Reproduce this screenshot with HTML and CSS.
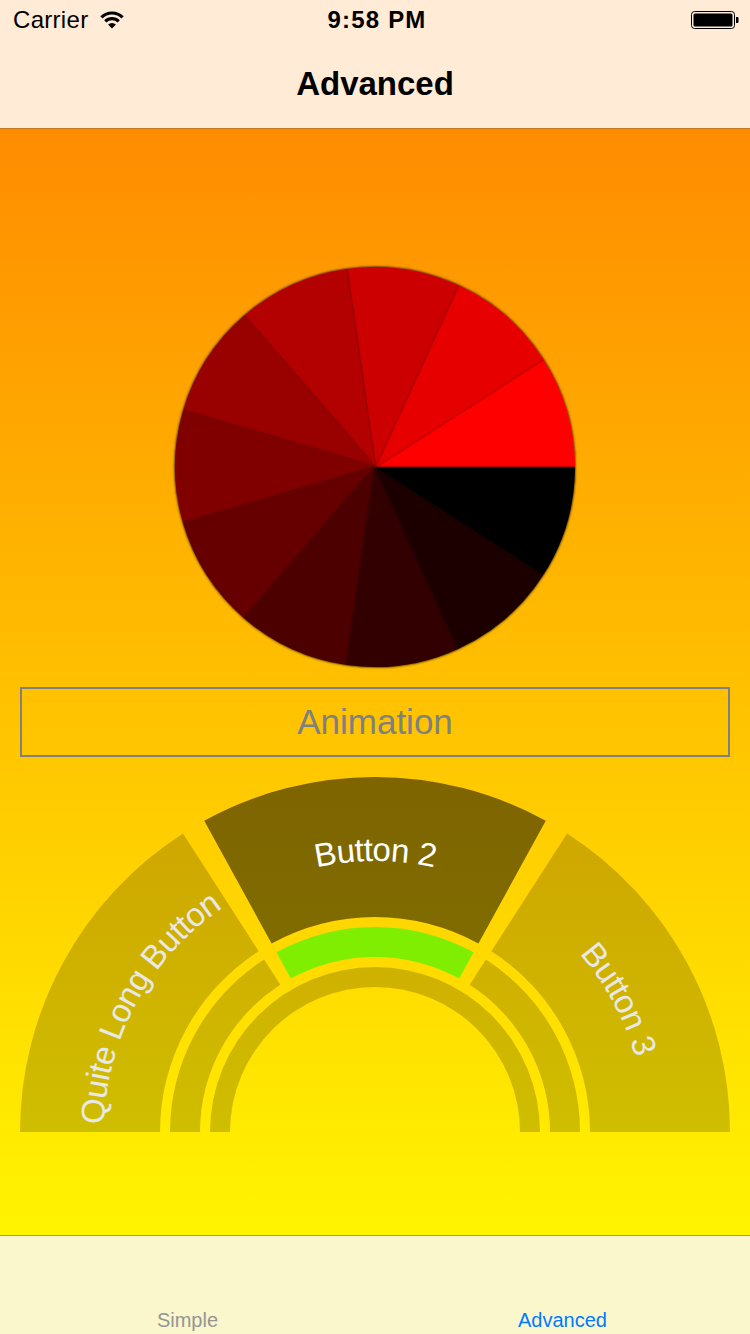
FILE: index.html
```html
<!DOCTYPE html>
<html>
<head>
<meta charset="utf-8">
<title>Advanced</title>
<link rel="stylesheet" href="styles.css">
</head>
<body>
<div class="screen">
  <header class="navbar">
    <div class="statusbar">
      <div class="status-left">
        <span class="carrier">Carrier</span>
        <svg class="wifi" width="26" height="18" viewBox="0 0 26 18">
          <path d="M2.4 6.4 A15 15 0 0 1 23.6 6.4" fill="none" stroke="#000" stroke-width="3.2"/>
          <path d="M6.3 10.3 A9.5 9.5 0 0 1 19.7 10.3" fill="none" stroke="#000" stroke-width="3.2"/>
          <path d="M13 17.5 L9.1 13.6 A5.5 5.5 0 0 1 16.9 13.6 Z" fill="#000"/>
        </svg>
      </div>
      <span class="time">9:58 PM</span>
      <svg class="battery" width="48" height="20" viewBox="0 0 48 20">
        <rect x="0.5" y="1.5" width="43" height="17" rx="3" fill="none" stroke="#000" stroke-width="1"/>
        <rect x="2.5" y="3.5" width="39" height="13" rx="1.5" fill="#000"/>
        <path d="M45 7 h1.5 a1 1 0 0 1 1 1 v4 a1 1 0 0 1 -1 1 h-1.5 Z" fill="#000"/>
      </svg>
    </div>
    <div class="titlebar"><h1 class="title">Advanced</h1></div>
  </header>

  <main class="content">
    <svg class="pie" width="400" height="400" viewBox="0 0 400 400">
      <defs>
        <filter id="sh" x="-10%" y="-10%" width="120%" height="120%">
          <feDropShadow dx="0" dy="0" stdDeviation="1.2" flood-color="#000" flood-opacity="0.85"/>
        </filter>
        <filter id="outer" x="-5%" y="-5%" width="110%" height="110%">
          <feDropShadow dx="0" dy="0" stdDeviation="1" flood-color="#4a2a00" flood-opacity="0.6"/>
        </filter>
      </defs>
      <g filter="url(#outer)">
        <path d="M200 200 L400 200 A200 200 0 0 0 368.25 91.88 Z" fill="#ff0000" filter="url(#sh)"/>
        <path d="M200 200 L368.25 91.88 A200 200 0 0 0 283.08 18.08 Z" fill="#e60000" filter="url(#sh)"/>
        <path d="M200 200 L283.08 18.08 A200 200 0 0 0 171.54 2.04 Z" fill="#cc0000" filter="url(#sh)"/>
        <path d="M200 200 L171.54 2.04 A200 200 0 0 0 69.02 48.86 Z" fill="#b30000" filter="url(#sh)"/>
        <path d="M200 200 L69.02 48.86 A200 200 0 0 0 8.10 143.66 Z" fill="#990000" filter="url(#sh)"/>
        <path d="M200 200 L8.10 143.66 A200 200 0 0 0 8.10 256.34 Z" fill="#800000" filter="url(#sh)"/>
        <path d="M200 200 L8.10 256.34 A200 200 0 0 0 69.02 351.14 Z" fill="#660000" filter="url(#sh)"/>
        <path d="M200 200 L69.02 351.14 A200 200 0 0 0 171.54 397.96 Z" fill="#4d0000" filter="url(#sh)"/>
        <path d="M200 200 L171.54 397.96 A200 200 0 0 0 283.08 381.92 Z" fill="#330000" filter="url(#sh)"/>
        <path d="M200 200 L283.08 381.92 A200 200 0 0 0 368.25 308.12 Z" fill="#1a0000" filter="url(#sh)"/>
        <path d="M200 200 L368.25 308.12 A200 200 0 0 0 400 200 Z" fill="#000000" filter="url(#sh)"/>
      </g>
    </svg>

    <div class="anim-button">Animation</div>

    <svg class="arcmenu" width="750" height="356" viewBox="0 0 750 356">
      <defs>
        <path id="labelArc" d="M104 355 A271 271 0 0 1 646 355"/>
      </defs>
      <path class="seg" d="M20 355 A355 355 0 0 1 182.94 56.44 L258.68 174.18 A215 215 0 0 0 160 355 Z"/>
      <path class="seg seg-active" d="M204.24 43.77 A355 355 0 0 1 545.76 43.77 L478.42 166.51 A215 215 0 0 0 271.58 166.51 Z"/>
      <path class="seg" d="M567.06 56.44 A355 355 0 0 1 730 355 L590 355 A215 215 0 0 0 491.32 174.18 Z"/>

      <path class="seg" d="M170 355 A205 205 0 0 1 264.09 182.59 L280.32 207.82 A175 175 0 0 0 200 355 Z"/>
      <path class="seg-green" d="M276.39 175.28 A205 205 0 0 1 473.61 175.28 L459.18 201.58 A175 175 0 0 0 290.82 201.58 Z"/>
      <path class="seg" d="M485.91 182.59 A205 205 0 0 1 580 355 L550 355 A175 175 0 0 0 469.68 207.82 Z"/>

      <path class="seg" d="M210 355 A165 165 0 0 1 540 355 L520 355 A145 145 0 0 0 230 355 Z"/>

      <text class="arc-label"><textPath href="#labelArc" startOffset="135.4" text-anchor="middle">Quite Long Button</textPath></text>
      <text class="arc-label arc-label-active"><textPath href="#labelArc" startOffset="425.7" text-anchor="middle">Button 2</textPath></text>
      <text class="arc-label"><textPath href="#labelArc" startOffset="716.0" text-anchor="middle">Button 3</textPath></text>
    </svg>
  </main>

  <nav class="tabbar">
    <div class="tab">Simple</div>
    <div class="tab tab-active">Advanced</div>
  </nav>
</div>
</body>
</html>
```

FILE: styles.css
```css
* { box-sizing: border-box; }

html, body {
  margin: 0;
  padding: 0;
}

body {
  width: 750px;
  height: 1334px;
  overflow: hidden;
  font-family: "Liberation Sans", Arial, sans-serif;
}

.screen {
  display: flex;
  flex-direction: column;
  width: 750px;
  height: 1334px;
}

.navbar {
  height: 129px;
  background: #ffebd6;
  border-bottom: 1px solid #c47a1e;
  display: flex;
  flex-direction: column;
}

.statusbar {
  height: 40px;
  display: flex;
  align-items: center;
  justify-content: space-between;
  padding: 0 13px 0 13px;
  position: relative;
}

.status-left {
  display: flex;
  align-items: center;
  gap: 11px;
}

.carrier {
  font-size: 24px;
  color: #000;
  letter-spacing: 0.3px;
}

.time {
  position: absolute;
  left: 0;
  right: 0;
  text-align: center;
  font-size: 24px;
  font-weight: bold;
  letter-spacing: 1.2px;
  color: #000;
  padding-left: 4px;
}

.battery { margin-right: -2px; }

.titlebar {
  flex: 1;
  display: flex;
  align-items: center;
  justify-content: center;
}

.title {
  margin: 0;
  font-size: 33px;
  font-weight: bold;
  color: #000;
}

.content {
  height: 1106px;
  background: linear-gradient(to bottom, #ff8c00, #fff400);
  display: flex;
  flex-direction: column;
  align-items: center;
  padding-top: 138px;
}

.pie {
  display: block;
  overflow: visible;
}

.anim-button {
  margin-top: 20px;
  width: 710px;
  height: 70px;
  border: 2px solid #808080;
  display: flex;
  align-items: center;
  justify-content: center;
  font-size: 35px;
  color: #808080;
}

.arcmenu {
  display: block;
  margin-top: 20px;
}

.seg { fill: rgba(0, 0, 0, 0.19); }
.seg-active { fill: rgba(0, 0, 0, 0.5); }
.seg-green { fill: #80ee00; }

.arc-label {
  font-family: "Liberation Sans", Arial, sans-serif;
  font-size: 33px;
  letter-spacing: -0.6px;
  fill: #e8e8e8;
}

.arc-label-active { fill: #ffffff; }

.tabbar {
  height: 99px;
  background: #faf7cd;
  border-top: 1px solid #b5a400;
  display: flex;
  align-items: flex-end;
  padding-bottom: 4px;
}

.tab {
  flex: 1;
  text-align: center;
  font-size: 20px;
  line-height: 20px;
  color: #959595;
}

.tab-active { color: #007aff; }
```
